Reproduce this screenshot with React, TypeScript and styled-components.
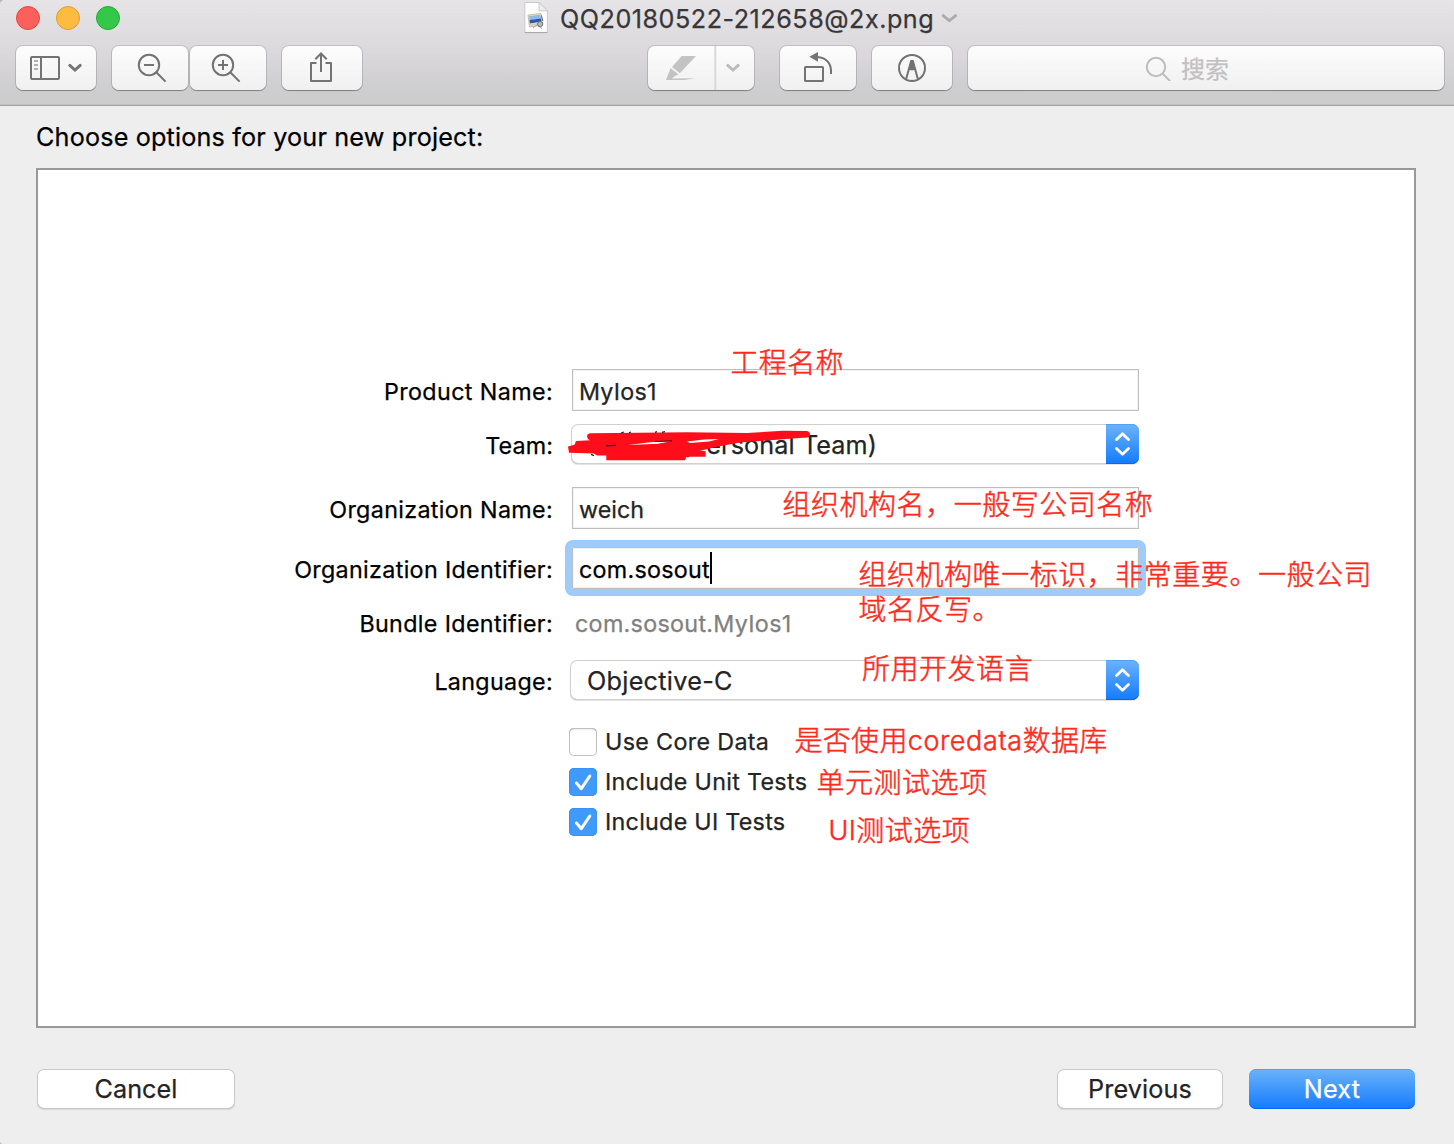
import React from "react";
import styled, { createGlobalStyle, css } from "styled-components";

const GlobalStyle = createGlobalStyle`
  * { box-sizing: border-box; }
  html, body { margin: 0; padding: 0; background: #b9b9bb; }
  body {
    font-family: Inter, "Noto Sans CJK SC", sans-serif;
    font-weight: 400;
    color: #000;
    overflow: hidden;
  }
`;

const Window = styled.div`
  display: flex;
  flex-direction: column;
  width: 1454px;
  height: 1144px;
  background: #eeeeee;
  border-radius: 5px 0 0 3px;
  overflow: hidden;
  -webkit-text-stroke-width: 0.25px;
`;

/* ---------- window header ---------- */

const Header = styled.header`
  flex: none;
  display: flex;
  flex-direction: column;
  justify-content: space-between;
  height: 106px;
  padding-bottom: 15px;
  background: linear-gradient(#e6e4e6 0%, #dbd9dc 48%, #cecdcf 85%, #cdcdcd 100%);
  border-bottom: 1px solid #a6a6a6;
  box-shadow: inset 0 -1px 0 #c1c1c1;
`;

const TitleBar = styled.div`
  display: grid;
  grid-template-columns: 508px auto;
  align-items: center;
  height: 36px;
  padding-left: 16px;
`;

const Lights = styled.div`
  display: flex;
  gap: 16px;
`;

const Light = styled.span<{ $fill: string; $edge: string }>`
  width: 24px;
  height: 24px;
  border-radius: 50%;
  background: ${(p) => p.$fill};
  border: 1px solid ${(p) => p.$edge};
`;

const Title = styled.div`
  display: flex;
  align-items: center;
  height: 36px;
`;

const TitleText = styled.span`
  margin-left: 12px;
  padding-top: 2px;
  font-size: 25.2px;
  line-height: 36px;
  letter-spacing: 0.5px;
  color: #383639;
  white-space: nowrap;
`;

const TitleChevron = styled.svg`
  margin-left: 7px;
`;

const Toolbar = styled.div`
  display: flex;
  justify-content: space-between;
  height: 44px;
  padding: 0 10px 0 16px;
`;

const ToolGroup = styled.div<{ $gap?: number }>`
  display: flex;
  gap: ${(p) => p.$gap ?? 16}px;
`;

const raised = css`
  border-radius: 7px;
  background: linear-gradient(#fdfdfd, #f0f0f0);
  box-shadow: 0 0 0 1px rgba(0, 0, 0, 0.12), 0 1px 1px rgba(0, 0, 0, 0.3);
`;

const ToolButton = styled.button<{ $width: number }>`
  ${raised}
  display: flex;
  width: ${(p) => p.$width}px;
  height: 44px;
  padding: 0;
  border: 0;
`;

const Glyph = styled.svg<{ $tone?: string }>`
  flex: none;
  fill: none;
  stroke: ${(p) => p.$tone ?? "#737373"};
  stroke-width: 2;
`;

const SearchField = styled.div`
  ${raised}
  display: flex;
  align-items: center;
  width: 476px;
  height: 44px;
  padding-left: 177px;
`;

const SearchText = styled.span`
  margin-left: 10px;
  padding-top: 3px;
  font-size: 24px;
  line-height: 41px;
  color: #c1c1c1;
`;

/* ---------- sheet ---------- */

const Sheet = styled.main`
  flex: 1;
  display: flex;
  flex-direction: column;
  padding: 12px 38px 34px 36px;
`;

const Heading = styled.h1`
  margin: 0;
  height: 50px;
  font-size: 25.2px;
  font-weight: 400;
  line-height: 38px;
  letter-spacing: 0.169px;
  white-space: nowrap;
`;

const Panel = styled.section`
  position: relative;
  height: 860px;
  padding-top: 199px;
  background: #fff;
  border: 2px solid #999;
`;

const Row = styled.div<{ $height: number; $gap?: number; $start?: number }>`
  display: grid;
  grid-template-columns: 515px auto;
  column-gap: ${(p) => p.$start ?? 19}px;
  justify-content: start;
  height: ${(p) => p.$height}px;
  margin-top: ${(p) => p.$gap ?? 0}px;
`;

const Label = styled.label<{ $spacing?: number; $drop?: number }>`
  display: flex;
  align-items: center;
  justify-content: flex-end;
  padding-top: ${(p) => p.$drop ?? 3}px;
  font-size: 23.3px;
  letter-spacing: ${(p) => p.$spacing ?? 0.33}px;
  white-space: nowrap;
`;

const Field = styled.div<{ $focused?: boolean; $spacing?: number }>`
  display: flex;
  align-items: center;
  width: 567px;
  height: 42px;
  padding: 3px 0 0 6px;
  border: 1px solid #bfbfbf;
  background: #fff;
  font-size: 23.3px;
  letter-spacing: ${(p) => p.$spacing ?? 0.3}px;
  color: ${(p) => (p.$focused ? "#000" : "#242424")};
  box-shadow: inset 0 0 0 1px #f3f3f3;
  ${(p) =>
    p.$focused &&
    css`
      outline: 7px solid #9fcbfb;
      border-radius: 1px;
    `}
`;

const Caret = styled.i`
  width: 2px;
  height: 32px;
  margin-top: -3px;
  background: #000;
`;

const StaticValue = styled.div`
  display: flex;
  align-items: center;
  padding-top: 1px;
  font-size: 23.3px;
  letter-spacing: 0.3px;
  color: #808080;
`;

const Select = styled.div<{ $width: number }>`
  display: flex;
  position: relative;
  justify-content: space-between;
  width: ${(p) => p.$width}px;
  height: 40px;
  border-radius: 7px;
  background: #fff;
  box-shadow: inset 0 0 0 1px #d0d0d0, inset 0 -1px 0 #bababa, 0 1px 1px rgba(0, 0, 0, 0.12);
`;

const SelectValue = styled.span<{ $indent: number; $spacing: number }>`
  padding-left: ${(p) => p.$indent}px;
  font-size: 25.2px;
  line-height: 42px;
  letter-spacing: ${(p) => p.$spacing}px;
  color: #242424;
  white-space: nowrap;
`;

const blue = css`
  background: linear-gradient(#6cb3fa, #3f97fb 50%, #147bfd);
  box-shadow: inset 0 1px 0 rgba(60, 150, 245, 0.6), inset 0 -1px 0 #0a66f0;
`;

const SelectCap = styled.span`
  ${blue}
  display: block;
  width: 33px;
  height: 40px;
  border-radius: 0 7px 7px 0;
`;

const Scribble = styled.svg`
  position: absolute;
  left: -6px;
  top: 0;
`;

const CheckList = styled.div`
  display: flex;
  flex-direction: column;
  gap: 12px;
  margin: 28px 0 0 531px;
`;

const CheckRow = styled.div<{ $spacing: number }>`
  display: flex;
  align-items: center;
  gap: 8px;
  height: 28px;
  font-size: 23.3px;
  line-height: 28px;
  letter-spacing: ${(p) => p.$spacing}px;
  color: #242424;
`;

const Box = styled.span<{ $on: boolean }>`
  display: block;
  width: 28px;
  height: 28px;
  border-radius: 5px;
  background: ${(p) => (p.$on ? "#3f9afb" : "#fff")};
  box-shadow: ${(p) =>
    p.$on
      ? "inset 0 0 0 1px #3a92f3"
      : "inset 0 0 0 1px #c0c0c0, inset 0 1px 0 #a3a3a3, inset 0 2px 2px #ececec"};
`;

const Note = styled.p<{ $x: number; $y: number; $spacing?: number }>`
  position: absolute;
  left: ${(p) => p.$x}px;
  top: ${(p) => p.$y}px;
  margin: 0;
  font-size: 28px;
  font-weight: 300;
  line-height: 35px;
  letter-spacing: ${(p) => p.$spacing ?? 0.53}px;
  color: #ff2a1c;
  -webkit-text-stroke: 0.5px #ff2a1c;
  white-space: nowrap;
`;

const Latin = styled.span<{ $spacing?: number }>`
  font-size: 27px;
  line-height: 1;
  vertical-align: 1px;
  letter-spacing: ${(p) => p.$spacing ?? 0.5}px;
`;

const Footer = styled.footer`
  display: flex;
  gap: 26px;
  padding: 41px 1px 0 1px;
`;

const Button = styled.button<{ $width: number; $primary?: boolean; $first?: boolean; $spacing: number }>`
  width: ${(p) => p.$width}px;
  height: 40px;
  margin-right: ${(p) => (p.$first ? "auto" : "0")};
  padding: 0;
  border: 0;
  border-radius: 7px;
  font: 400 25.2px/40px Inter, sans-serif;
  letter-spacing: ${(p) => p.$spacing}px;
  color: #242424;
  background: #fff;
  box-shadow: inset 0 0 0 1px #c9c9c9, inset 0 -1px 0 #b3b3b3, 0 1px 1px rgba(0, 0, 0, 0.1);
  ${(p) =>
    p.$primary &&
    css`
      ${blue}
      color: #fff;
    `}
`;

function DocumentIcon() {
  return (
    <svg width="24" height="34" viewBox="0 1 24 34">
      <path d="M0.8 2.5H15L23.4 11V32.4H0.8Z" fill="#fdfdfd" stroke="#c3c1c4" strokeWidth="0.8" />
      <path d="M0.8 32.6H23.4" stroke="#a5a3a6" />
      <path d="M15 2.5V10.8H23.4Z" fill="#eeeeee" stroke="#c3c1c4" strokeWidth="0.8" />
      <path d="M4 15L17 13.5L18.5 25L5.5 27Z" fill="#e8e4d8" stroke="#b9a98c" strokeWidth="0.7" />
      <path d="M5 16L16.5 14.7L17 18.5L5.5 20Z" fill="#8fb9ea" />
      <path d="M5.5 20L17 18.5L17.4 21.5L5.9 23.5Z" fill="#2d57a6" />
      <path d="M6 24L15 22.6L15.4 24.8L6.3 26Z" fill="#d8cfb6" />
      <path d="M9 28L13 25L18 28.5" fill="none" stroke="#a8a8a8" strokeWidth="1" />
      <circle cx="16.2" cy="24" r="2.6" fill="#b4bac1" stroke="#6f7276" strokeWidth="1" />
      <path d="M17.5 15.5L18.8 21" stroke="#6a6d71" strokeWidth="1" />
    </svg>
  );
}

function SelectArrows() {
  return (
    <svg width="33" height="40" fill="none" stroke="#fff" strokeWidth="2.8" strokeLinecap="round" strokeLinejoin="round">
      <path d="M10.5 15.5L16.5 9.8L22.5 15.5M10.5 24.5L16.5 30.2L22.5 24.5" />
    </svg>
  );
}

function Check({ on }: { on: boolean }) {
  return (
    <Box $on={on}>
      {on && (
        <svg width="28" height="28" fill="none" stroke="#fff" strokeWidth="3" strokeLinecap="round" strokeLinejoin="round">
          <path d="M7.5 15L12.3 20.7L20.8 8" />
        </svg>
      )}
    </Box>
  );
}

function TeamScribble() {
  return (
    <Scribble width="246" height="40" viewBox="565 424 246 40">
      <path
        d="M590 433.2L687 432.2L747 433L783 430.8L807 431Q810 431.5 810 434.5Q810 437 806 437.6L770 440.2L740 442.5L718 446.5L700 450.7L705.7 451.3V456.7H686.5L685 460.3H606.3V455.5H597L594 453.6L569 452.8L568 446.5L574.5 444.8L576 441L590 440.3Q587 439 587 436.5Q587 433.8 590 433.2Z"
        fill="#ff0d1b"
      />
      <path d="M628 444.9L650 442.3L671 441.3L658 443.8ZM687 441.6L704 439.5L719 438.9L709 441.5L690 443Z" fill="#fff" />
      <path
        d="M655 441.5L672 440.8M606 445.8L616 445.3M621 433L624 432M629 432.8L631 432M655 432.4L657 431.6M662 432.4L665 431.6M591 454.4L594 455.6"
        fill="none"
        stroke="#3a1a1a"
        strokeWidth="1.2"
      />
    </Scribble>
  );
}

export default function App() {
  return (
    <>
      <GlobalStyle />
      <Window>
        <Header>
          <TitleBar>
            <Lights>
              <Light $fill="#fc605c" $edge="#e2483f" />
              <Light $fill="#fdbc40" $edge="#dd9d33" />
              <Light $fill="#34c84a" $edge="#27a934" />
            </Lights>
            <Title>
              <DocumentIcon />
              <TitleText>QQ20180522-212658@2x.png</TitleText>
              <TitleChevron width="18" height="12" fill="none" stroke="#adabae" strokeWidth="2.8">
                <path d="M1.2 2.8L8.4 8.6L15.6 2.8" />
              </TitleChevron>
            </Title>
          </TitleBar>

          <Toolbar>
            <ToolGroup>
              <ToolButton $width={80} aria-label="Sidebar">
                <Glyph width="80" height="44" viewBox="16 46 80 44">
                  <rect x="31" y="57" width="28" height="22" rx="1" />
                  <path d="M41 57V79" />
                  <path d="M34 61H38M34 65H38M34 69H38" stroke="#b0b0b0" />
                  <path d="M69.8 65.4L75 70L80.2 65.4" strokeWidth="3" strokeLinecap="round" />
                </Glyph>
              </ToolButton>
              <ToolGroup $gap={2}>
                <ToolButton $width={76} aria-label="Zoom out">
                  <Glyph width="76" height="44" viewBox="112 46 76 44">
                    <circle cx="149" cy="65" r="10.2" />
                    <path d="M144 65H154M156.5 72.5L165.6 81.6" />
                  </Glyph>
                </ToolButton>
                <ToolButton $width={76} aria-label="Zoom in">
                  <Glyph width="76" height="44" viewBox="190 46 76 44">
                    <circle cx="223" cy="65" r="10.2" />
                    <path d="M218 65H228M223 60V70M230.5 72.5L239.6 81.6" />
                  </Glyph>
                </ToolButton>
              </ToolGroup>
              <ToolButton $width={80} aria-label="Share">
                <Glyph width="80" height="44" viewBox="282 46 80 44">
                  <path d="M316.5 63H311V81H331V63H325.5" strokeLinejoin="round" />
                  <path d="M321 72V53.5M315.3 59.3L321 53.5L326.7 59.3" />
                </Glyph>
              </ToolButton>
            </ToolGroup>

            <ToolGroup>
              <ToolGroup $gap={26}>
                <ToolButton $width={106} aria-label="Highlight">
                  <Glyph $tone="#bcbcbc" width="106" height="44" viewBox="648 46 106 44">
                    <path d="M681.7 56H696L679.8 73.2L672 67Z" fill="#c3c3c3" stroke="none" />
                    <path d="M670.6 68L678.4 74.6L674.5 76.3L672 78.4L695.5 78.2L684 80H666Z" fill="#c3c3c3" stroke="none" />
                    <path d="M715.3 46V90" stroke="#d9d9d9" />
                    <path d="M727.8 65.4L733 70L738.2 65.4" strokeWidth="3" strokeLinecap="round" />
                  </Glyph>
                </ToolButton>
                <ToolButton $width={76} aria-label="Rotate">
                  <Glyph width="76" height="44" viewBox="780 46 76 44">
                    <rect x="805" y="67" width="18" height="14" rx="0.5" />
                    <path d="M809.3 56.8L818 52V61.8Z" fill="#737373" stroke="none" />
                    <path d="M817 57C827 57.5 831.8 64 831 74" />
                  </Glyph>
                </ToolButton>
              </ToolGroup>
              <ToolButton $width={80} aria-label="Markup">
                <Glyph width="80" height="44" viewBox="872 46 80 44">
                  <circle cx="912" cy="68" r="13" />
                  <path d="M911.4 60L906 79.5M912.6 60L918 79.5" />
                  <path d="M911.3 60H912.7L916 71Q914 69.3 912 70.5Q910 69.3 908 71Z" fill="#737373" stroke="none" />
                </Glyph>
              </ToolButton>
              <SearchField>
                <Glyph $tone="#bdbdbd" width="26" height="26" viewBox="1145 55 26 26">
                  <circle cx="1156" cy="67" r="9.2" />
                  <path d="M1162.5 73.5L1170.2 81.2" />
                </Glyph>
                <SearchText>搜索</SearchText>
              </SearchField>
            </ToolGroup>
          </Toolbar>
        </Header>

        <Sheet>
          <Heading>Choose options for your new project:</Heading>
          <Panel>
            <Row $height={42}>
              <Label $spacing={0.38}>Product Name:</Label>
              <Field $spacing={0.2}>MyIos1</Field>
            </Row>
            <Row $height={40} $gap={13} $start={18}>
              <Label $spacing={0.12}>Team:</Label>
              <Select $width={568}>
                <SelectValue $indent={110} $spacing={0.1}>(Personal Team)</SelectValue>
                <SelectCap><SelectArrows /></SelectCap>
                <TeamScribble />
              </Select>
            </Row>
            <Row $height={42} $gap={23}>
              <Label>Organization Name:</Label>
              <Field $spacing={0.03}>weich</Field>
            </Row>
            <Row $height={42} $gap={18}>
              <Label>Organization Identifier:</Label>
              <Field $focused $spacing={0.26}>
                com.sosout
                <Caret />
              </Field>
            </Row>
            <Row $height={32} $gap={18} $start={22}>
              <Label $spacing={0.35} $drop={1}>Bundle Identifier:</Label>
              <StaticValue>com.sosout.MyIos1</StaticValue>
            </Row>
            <Row $height={40} $gap={21} $start={17}>
              <Label $spacing={0.32}>Language:</Label>
              <Select $width={569}>
                <SelectValue $indent={17} $spacing={0.287}>Objective-C</SelectValue>
                <SelectCap><SelectArrows /></SelectCap>
              </Select>
            </Row>
            <CheckList>
              <CheckRow $spacing={0.33}><Check on={false} />Use Core Data</CheckRow>
              <CheckRow $spacing={0.3}><Check on />Include Unit Tests</CheckRow>
              <CheckRow $spacing={0.27}><Check on />Include UI Tests</CheckRow>
            </CheckList>

            <Note $x={692.5} $y={175.5} $spacing={0.35}>工程名称</Note>
            <Note $x={744.5} $y={317.5}>组织机构名，一般写公司名称</Note>
            <Note $x={820.5} $y={387.5}>
              组织机构唯一标识，非常重要。一般公司
              <br />
              域名反写。
            </Note>
            <Note $x={824} $y={481.5}>所用开发语言</Note>
            <Note $x={756.5} $y={553.5} $spacing={0.3}>
              是否使用<Latin $spacing={0.6}>coredata</Latin>数据库
            </Note>
            <Note $x={778.5} $y={595.5}>单元测试选项</Note>
            <Note $x={790.5} $y={643.5}>
              <Latin $spacing={0.4}>UI</Latin>测试选项
            </Note>
          </Panel>
          <Footer>
            <Button $width={198} $first $spacing={0.04}>Cancel</Button>
            <Button $width={166} $spacing={0.158}>Previous</Button>
            <Button $width={166} $primary $spacing={0.221}>Next</Button>
          </Footer>
        </Sheet>
      </Window>
    </>
  );
}
